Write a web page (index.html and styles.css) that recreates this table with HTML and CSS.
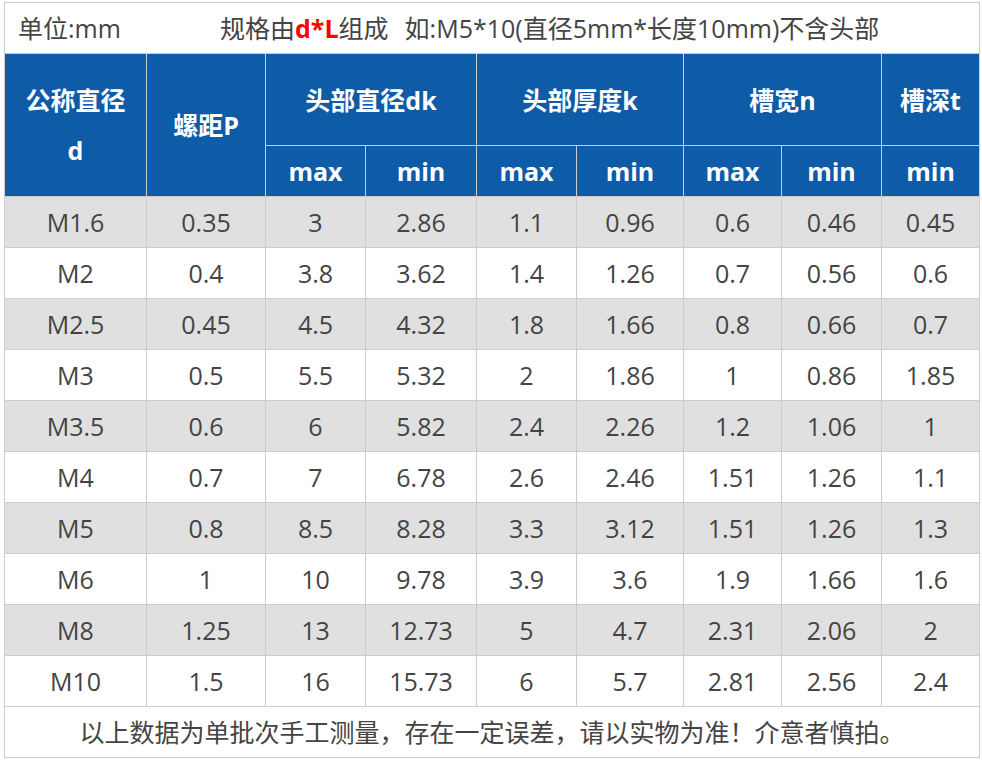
FILE: index.html
```html
<!DOCTYPE html>
<html lang="zh-CN">
<head>
<meta charset="utf-8">
<title>规格表</title>
<link rel="stylesheet" href="styles.css">
</head>
<body>
<table class="spec">
  <colgroup>
    <col class="c1"><col class="c2"><col class="c3"><col class="c4"><col class="c5"><col class="c6"><col class="c7"><col class="c8"><col class="c9">
  </colgroup>
  <tr class="title-row">
    <td colspan="9" class="title">
      <div class="title-inner"><span class="unit">单位:mm</span><span class="rule">规格由<b class="red">d*L</b>组成<span class="sp"></span>如:M5*10(直径5mm*长度10mm)不含头部</span></div>
    </td>
  </tr>
  <tr class="head1">
    <th rowspan="2" class="two-line">公称直径<br>d</th>
    <th rowspan="2">螺距P</th>
    <th colspan="2">头部直径dk</th>
    <th colspan="2">头部厚度k</th>
    <th colspan="2">槽宽n</th>
    <th>槽深t</th>
  </tr>
  <tr class="head2">
    <th>max</th><th>min</th><th>max</th><th>min</th><th>max</th><th>min</th><th>min</th>
  </tr>
  <tr class="odd"><td>M1.6</td><td>0.35</td><td>3</td><td>2.86</td><td>1.1</td><td>0.96</td><td>0.6</td><td>0.46</td><td>0.45</td></tr>
  <tr><td>M2</td><td>0.4</td><td>3.8</td><td>3.62</td><td>1.4</td><td>1.26</td><td>0.7</td><td>0.56</td><td>0.6</td></tr>
  <tr class="odd"><td>M2.5</td><td>0.45</td><td>4.5</td><td>4.32</td><td>1.8</td><td>1.66</td><td>0.8</td><td>0.66</td><td>0.7</td></tr>
  <tr><td>M3</td><td>0.5</td><td>5.5</td><td>5.32</td><td>2</td><td>1.86</td><td>1</td><td>0.86</td><td>1.85</td></tr>
  <tr class="odd"><td>M3.5</td><td>0.6</td><td>6</td><td>5.82</td><td>2.4</td><td>2.26</td><td>1.2</td><td>1.06</td><td>1</td></tr>
  <tr><td>M4</td><td>0.7</td><td>7</td><td>6.78</td><td>2.6</td><td>2.46</td><td>1.51</td><td>1.26</td><td>1.1</td></tr>
  <tr class="odd"><td>M5</td><td>0.8</td><td>8.5</td><td>8.28</td><td>3.3</td><td>3.12</td><td>1.51</td><td>1.26</td><td>1.3</td></tr>
  <tr><td>M6</td><td>1</td><td>10</td><td>9.78</td><td>3.9</td><td>3.6</td><td>1.9</td><td>1.66</td><td>1.6</td></tr>
  <tr class="odd"><td>M8</td><td>1.25</td><td>13</td><td>12.73</td><td>5</td><td>4.7</td><td>2.31</td><td>2.06</td><td>2</td></tr>
  <tr><td>M10</td><td>1.5</td><td>16</td><td>15.73</td><td>6</td><td>5.7</td><td>2.81</td><td>2.56</td><td>2.4</td></tr>
  <tr><td colspan="9" class="note">以上数据为单批次手工测量，存在一定误差，请以实物为准！介意者慎拍。</td></tr>
</table>
</body>
</html>
```
FILE: styles.css
```css
html, body {
  margin: 0;
  padding: 0;
  background: #ffffff;
}
body {
  padding: 2px 0 0 4px;
  font-family: "Open Sans", "Noto Sans CJK SC", sans-serif;
  color: #444444;
}
.spec {
  border-collapse: collapse;
  table-layout: fixed;
  width: 975px;
}
.c1 { width: 142px; }
.c2 { width: 119px; }
.c3 { width: 100px; }
.c4 { width: 111px; }
.c5 { width: 100px; }
.c6 { width: 107px; }
.c7 { width: 98px; }
.c8 { width: 100px; }
.c9 { width: 98px; }
.spec td, .spec th {
  border: 1px solid #cccccc;
  padding: 0;
  height: 50px;
  text-align: center;
  vertical-align: middle;
  font-size: 25px;
  line-height: 30px;
}
.spec td {
  color: #444444;
  font-weight: 400;
}
.spec th {
  background: #0e5ba8;
  color: #ffffff;
  font-weight: 700;
  font-size: 25px;
}
.head1 th {
  height: 91px;
}
.spec th.two-line {
  line-height: 50px;
}
.odd td {
  background: #e0e0e0;
}
.spec td.title {
  text-align: left;
  color: #444444;
}
.title-inner {
  display: flex;
  align-items: center;
  padding-left: 13px;
}
.unit {
  width: 202px;
  flex: none;
}
.red {
  color: #ff0000;
  font-weight: 700;
}
.sp {
  display: inline-block;
  width: 16px;
}
.note {
  color: #444444;
}
```
